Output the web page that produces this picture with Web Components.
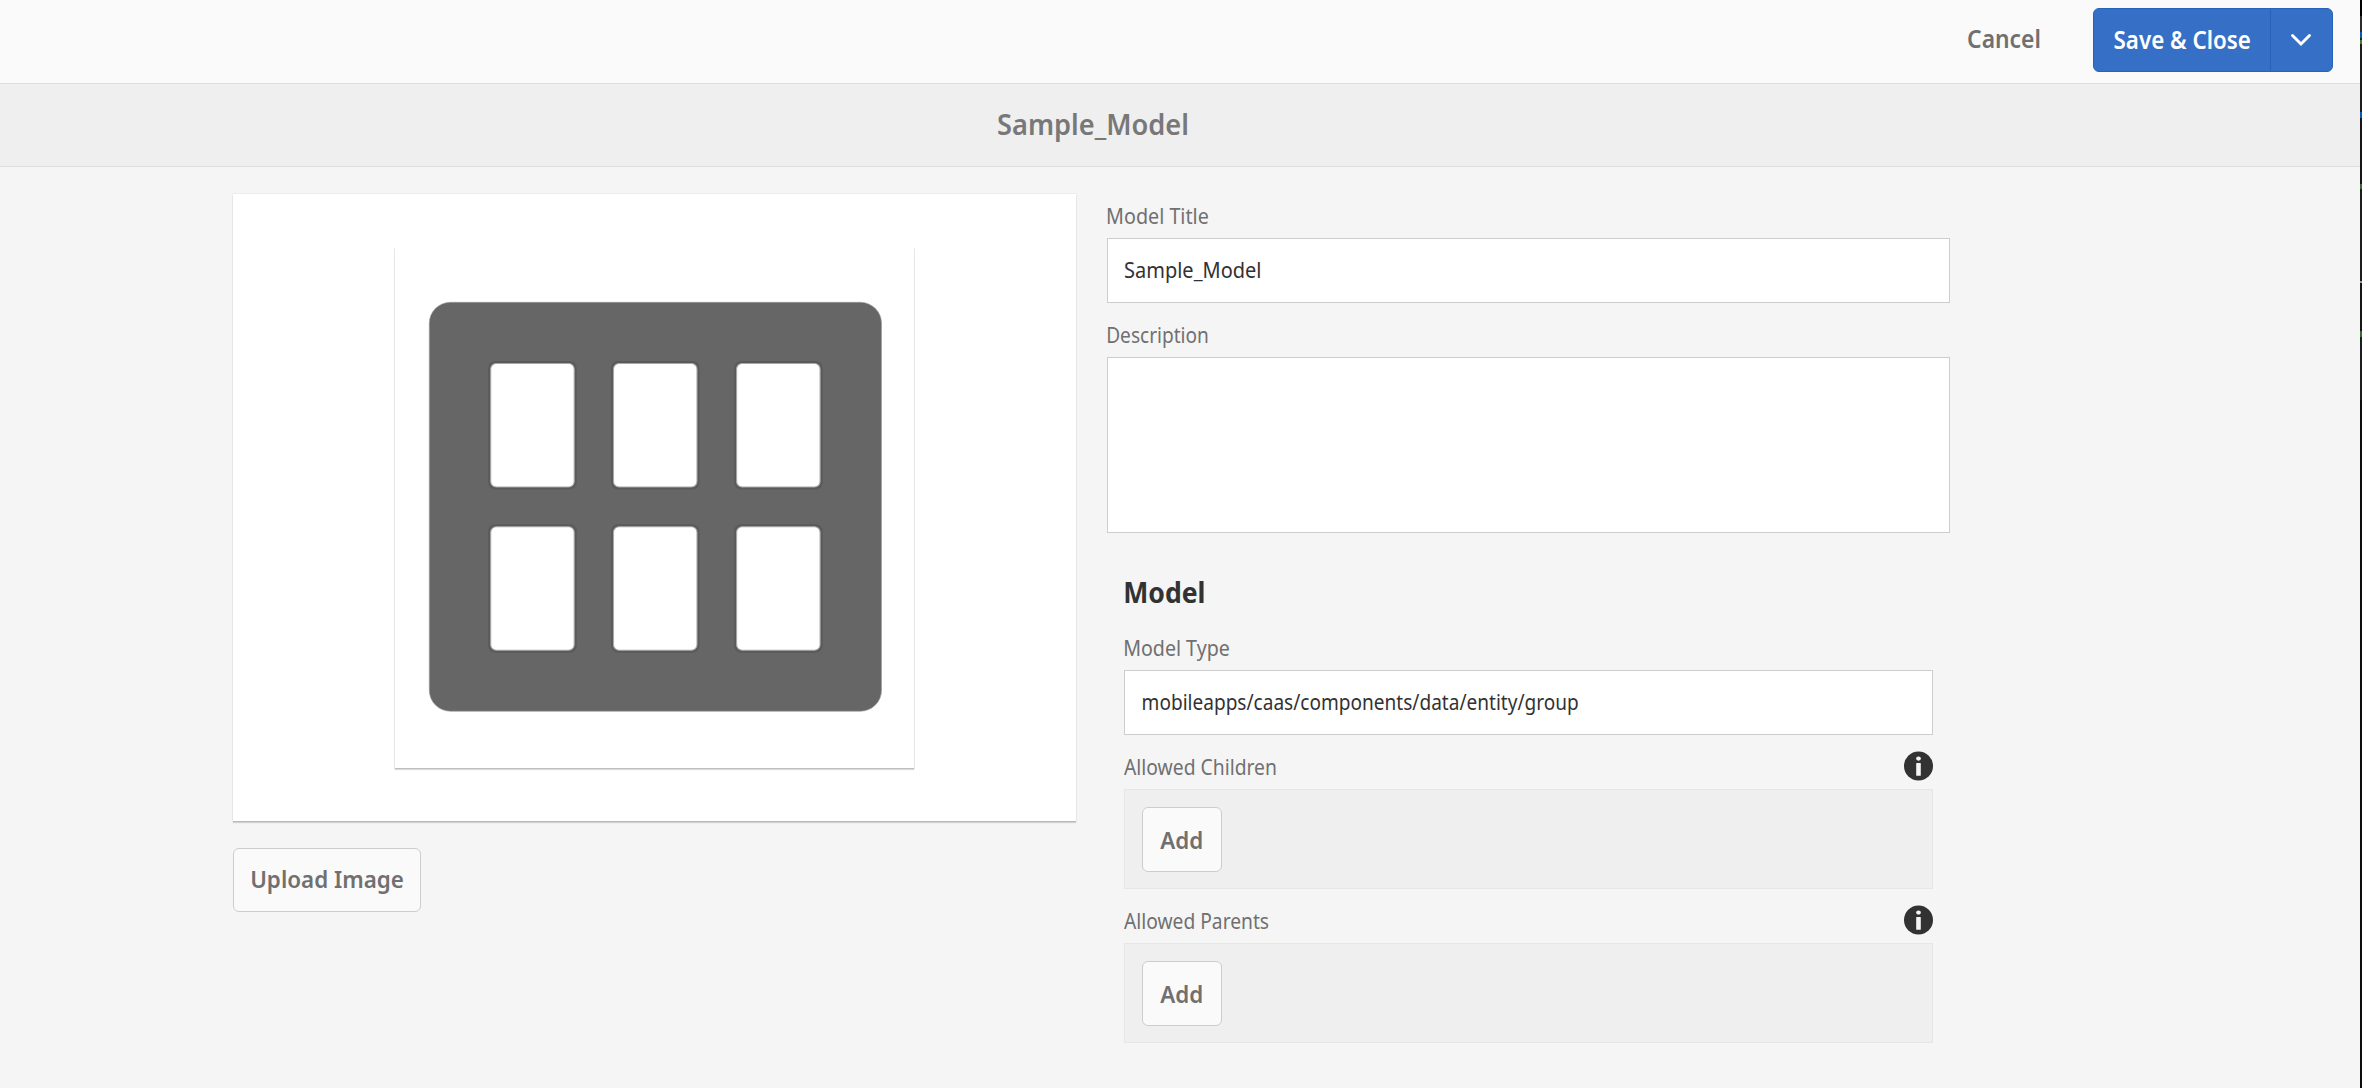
<!DOCTYPE html>
<html lang="en"><head><meta charset="utf-8"><title>Sample_Model</title>
<style>
html,body{margin:0;height:100%;overflow:hidden;background:#f5f5f5;font-family:"Noto Sans","Open Sans",sans-serif;color:#707070}
</style></head><body>
<model-editor></model-editor>
<script>
const define=(name,html,init)=>customElements.define(name,class extends HTMLElement{
  constructor(){super();this.attachShadow({mode:'open'}).innerHTML=html;}
  connectedCallback(){if(init)init.call(this,this.shadowRoot);}
});
const ctx=document.createElement('canvas').getContext('2d');

// One line of text whose ink is condensed to an exact width (w), starting at an optional bearing.
define('fit-text',`<style>:host{display:block;flex:none;white-space:nowrap}span{display:inline-block;transform-origin:0 50%}</style><span></span>`,function(r){
  const s=r.querySelector('span'),g=n=>this.getAttribute(n),w=+g('w');
  s.textContent=g('text');
  this.style.cssText=`width:${w}px;font-size:${g('size')}px;font-weight:${g('weight')||400}`;
  ctx.font=`${g('weight')||400} ${g('size')}px "Noto Sans","Open Sans",sans-serif`;
  const m=ctx.measureText(g('text')),ink=m.actualBoundingBoxLeft+m.actualBoundingBoxRight,k=w/ink;
  s.style.transform=`translateX(${m.actualBoundingBoxLeft*k+(+g('bearing')||0)}px) scaleX(${k})`;
});

define('tool-button',`<style>:host{display:flex;box-sizing:border-box;height:64px;line-height:60px;justify-content:center;background:#fafafa;border:1px solid #cdcdcd;border-radius:6px;color:#707070}</style><slot></slot>`);

define('split-button',`<style>
:host{display:flex;box-sizing:border-box;width:240px;height:64px;background:#3670c6;border:1px solid #2662ba;border-radius:6px;color:#fff}
.main{display:flex;box-sizing:border-box;width:177px;padding-left:20px;line-height:61px;border-right:1px solid #2662ba}
.more{flex:1;display:flex;align-items:center;justify-content:center}
svg{display:block;margin:0 0 1px -1px}
</style><div class="main"><slot></slot></div><div class="more"><svg width="22" height="14" viewBox="0 0 22 14"><path d="M2.500 2.500 11 11l8.500-8.500" fill="none" stroke="#fff" stroke-width="2.900" stroke-linecap="round" stroke-linejoin="miter"/></svg></div>`);

define('action-bar',`<style>:host{display:flex;box-sizing:border-box;height:84px;padding:8px 27px 0 0;justify-content:flex-end;background:#fafafa;border-bottom:1px solid #dedede}
.cancel{line-height:61px;margin-right:53px}</style>
<fit-text class="cancel" text="Cancel" w="72" size="24.500" weight="600"></fit-text>
<split-button><fit-text text="Save &amp; Close" w="136" size="24.500" weight="600" bearing=".5"></fit-text></split-button>`);

define('title-bar',`<style>:host{display:flex;box-sizing:border-box;height:83px;padding-left:998px;background:#efefef;border-bottom:1px solid #dedede;line-height:81px;color:#787878}</style>
<fit-text text="Sample_Model" w="189" size="28" weight="600"></fit-text>`);

define('info-icon',`<style>:host{display:block;width:29px;height:30px}svg{display:block}</style>
<svg width="29" height="30" viewBox="0 0 29 30"><circle cx="14.500" cy="15" r="14.500" fill="#323232"/><ellipse cx="14.500" cy="7.600" rx="2.400" ry="2.100" fill="#f4f4f4"/><rect x="12.200" y="12" width="4.600" height="12.800" rx=".6" fill="#f4f4f4"/></svg>`);

define('field-label',`<style>:host{display:flex;box-sizing:border-box;height:54px;padding-top:10px;line-height:44px;justify-content:space-between}info-icon{margin-top:6px}</style><slot></slot>`,function(r){
  if(this.hasAttribute('info'))r.appendChild(document.createElement('info-icon'));
});

define('text-box',`<style>:host{display:flex;box-sizing:border-box;height:65px;padding-left:16px;line-height:62px;background:#fff;border:1px solid #cdcdcd;color:#323232}:host([tall]){height:176px}</style><slot></slot>`);

define('item-list',`<style>:host{display:flex;box-sizing:border-box;height:100px;padding:17px;background:#efefef;border:1px solid #e6e6e6}tool-button{width:80px;height:65px;line-height:63px}</style>
<tool-button><fit-text text="Add" w="42" size="24" weight="600" bearing="-.8"></fit-text></tool-button>`);

define('model-thumbnail',`<style>
:host{display:flex;box-sizing:border-box;width:843px;height:627px;justify-content:center;padding:53px 0 0 0;background:#fff;box-shadow:0 1px 0 #b8b8b8,0 2px 1px rgba(0,0,0,.14),0 0 1px rgba(0,0,0,.22)}
.frame{box-sizing:border-box;width:519px;height:521px;background:#fff;box-shadow:0 1px 0 #bebebe,0 2px 1px rgba(0,0,0,.14),-1px 1px 0 #ededed,1px 1px 0 #ededed}
svg{display:block}
</style><div class="frame"><svg width="519" height="520" viewBox="395 247 519 520">
<rect x="429.300" y="302.300" width="452.200" height="408.900" rx="21" fill="#666" stroke="#999" stroke-width=".6"/>
<g id="cells" fill="#fff"></g></svg></div>`,function(r){
  let out='';
  for(const y of [363.5,526.7])for(const x of [490.7,613.5,736.6])
    out+=`<rect x="${x-2.5}" y="${y-2.5}" width="88.500" height="128.500" rx="7" fill="#5a5a5a"/><rect x="${x}" y="${y}" width="83.500" height="123.500" rx="5.500" stroke="#a8a8a8" stroke-width="1.100"/>`;
  r.querySelector('#cells').innerHTML=out;
});

define('image-column',`<style>:host{display:flex;flex-direction:column;align-items:flex-start;width:843px;padding-top:27px}tool-button{width:188px;margin-top:27px}</style>
<model-thumbnail></model-thumbnail>
<tool-button><fit-text text="Upload Image" w="151" size="24" weight="600"></fit-text></tool-button>`);

define('form-column',`<style>:host{display:flex;flex-direction:column;width:843px;padding-top:17px}
section{display:flex;flex-direction:column;padding:0 17px}
.heading{height:83px;box-sizing:border-box;padding-top:39px;line-height:40px;color:#323232}</style>
<field-label><fit-text text="Model Title" w="100" size="21" bearing="1"></fit-text></field-label>
<text-box><fit-text text="Sample_Model" w="135" size="21.500" bearing="1"></fit-text></text-box>
<field-label><fit-text text="Description" w="100" size="21" bearing="1"></fit-text></field-label>
<text-box tall></text-box>
<section>
<div class="heading"><fit-text text="Model" w="79" size="29" weight="700" bearing="1"></fit-text></div>
<field-label><fit-text text="Model Type" w="104" size="21" bearing="1"></fit-text></field-label>
<text-box><fit-text text="mobileapps/caas/components/data/entity/group" w="436" size="21.500" bearing="1.500"></fit-text></text-box>
<field-label info><fit-text text="Allowed Children" w="152" size="21"></fit-text></field-label>
<item-list></item-list>
<field-label info><fit-text text="Allowed Parents" w="145" size="21"></fit-text></field-label>
<item-list></item-list>
</section>`);

define('model-editor',`<style>
:host{display:flex;width:2362px;height:1088px}
.page{width:2360px;display:flex;flex-direction:column}
main{display:flex;gap:31px;padding-left:233px}
.edge{width:2px;background:linear-gradient(#000 16px,#2b2b2b 16px 32px,#0b57b0 32px 38px,#1b1c1e 38px 40px,#3f7a2f 40px 44px,#1b1c1e 44px 112px,#0b57b0 112px 118px,#151515 118px 184px,#356a2a 184px 189px,#1b1c1e 189px 281px,#999 281px 283px,#151515 283px 331px,#356a2a 331px 337px,#1b1c1e 337px 400px,#0c0c0c 400px)}
</style><div class="page"><action-bar></action-bar><title-bar></title-bar><main><image-column></image-column><form-column></form-column></main></div><div class="edge"></div>`);
</script></body></html>
